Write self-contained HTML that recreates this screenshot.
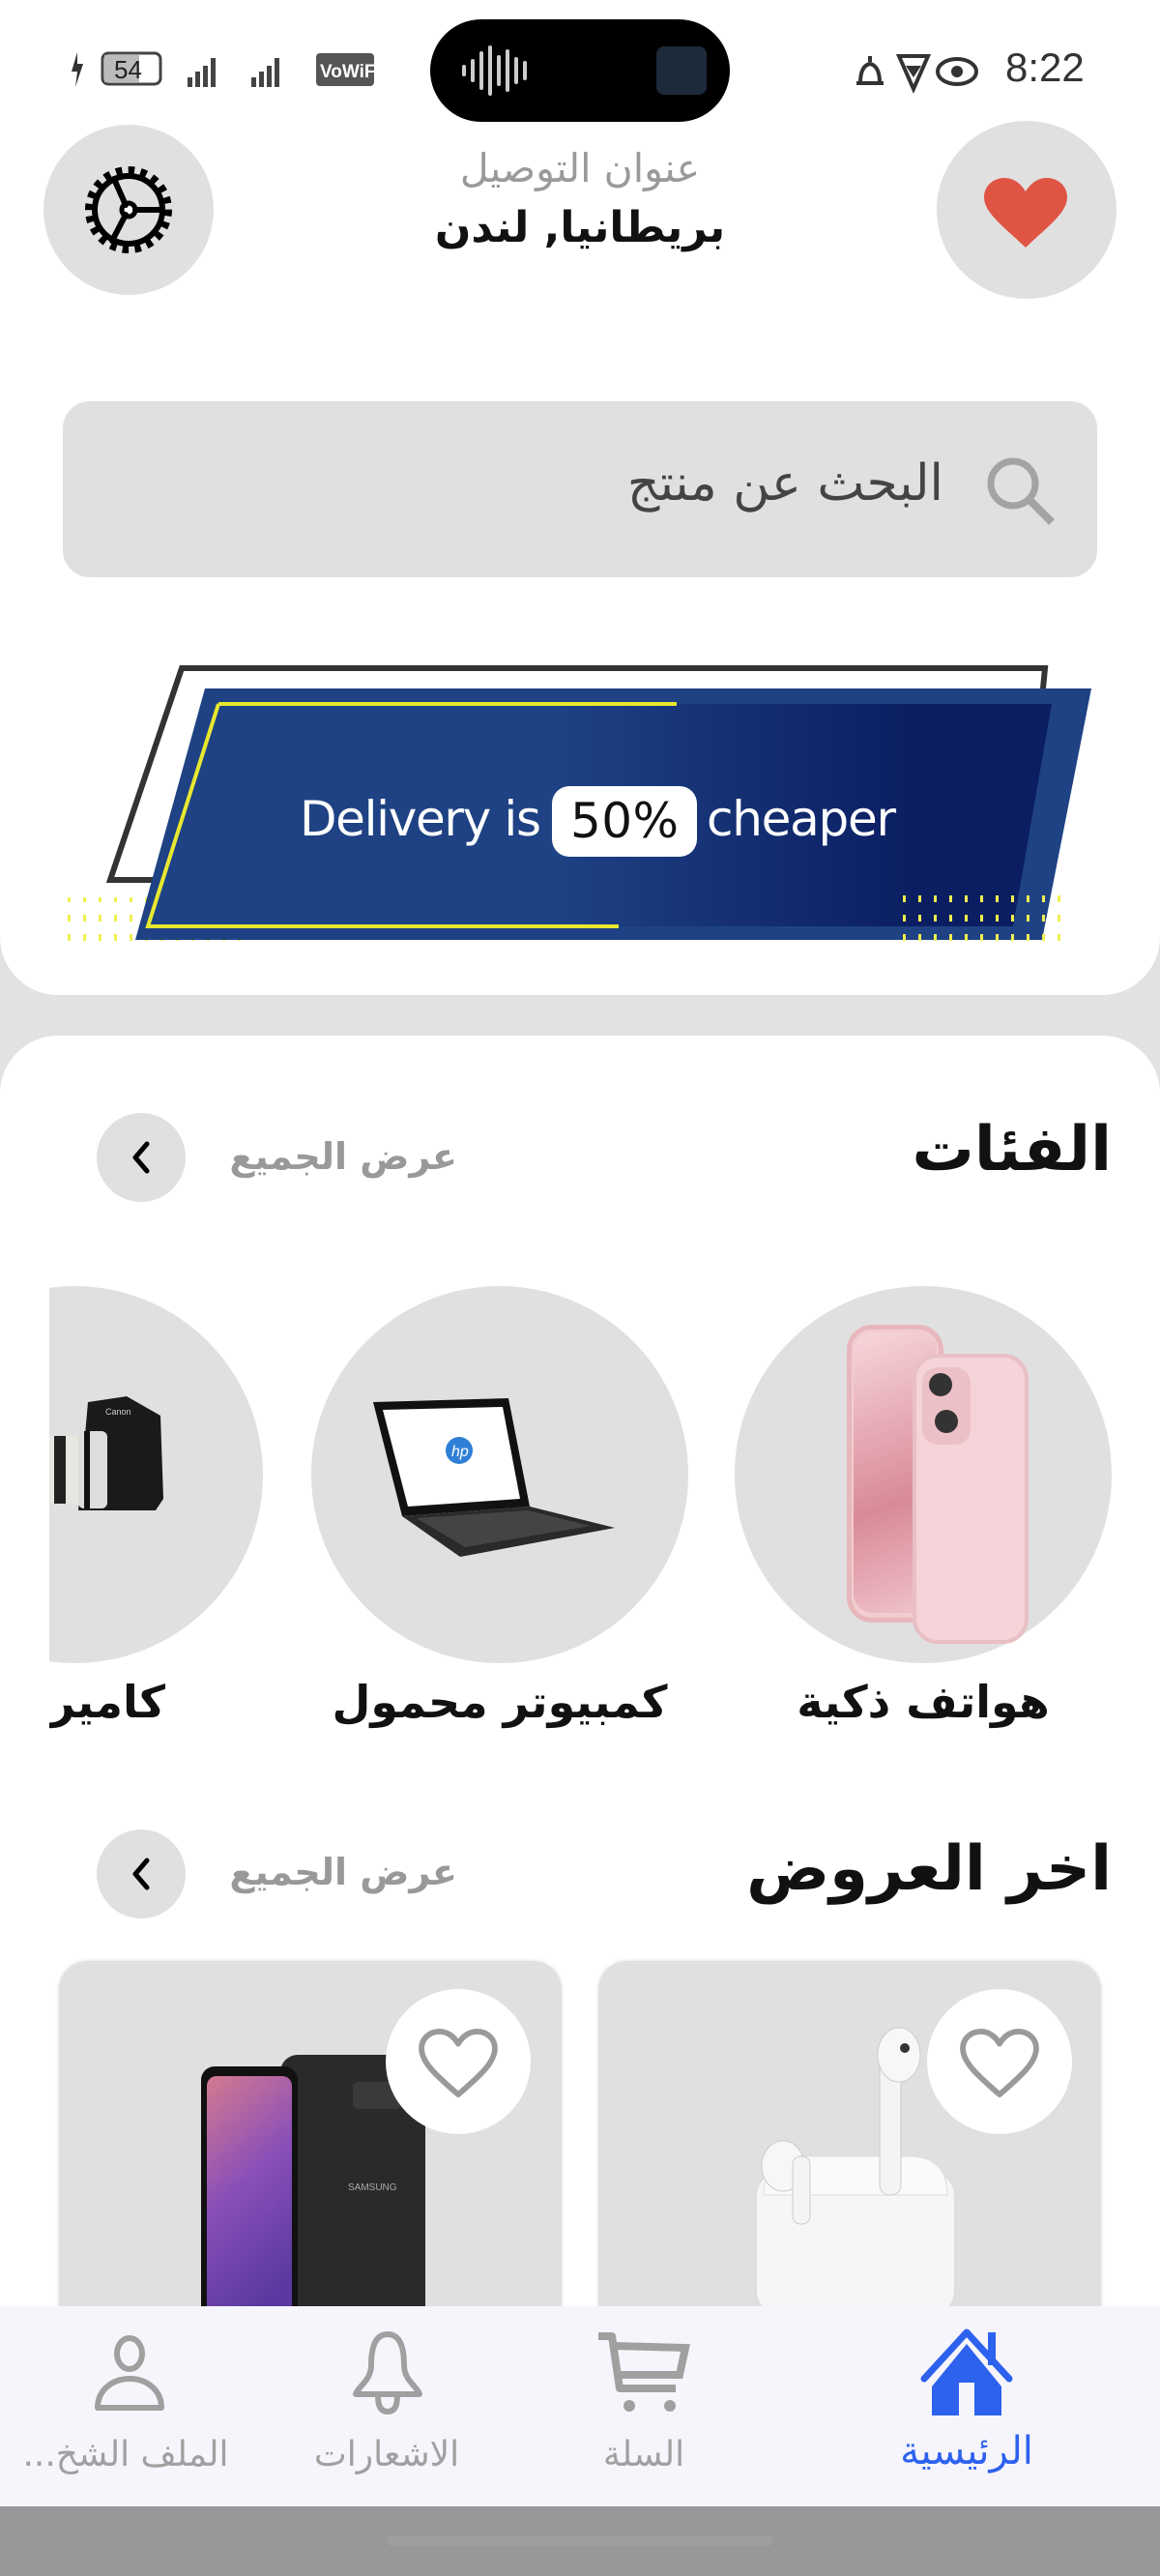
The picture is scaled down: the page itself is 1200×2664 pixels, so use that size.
<!DOCTYPE html>
<html><head><meta charset="utf-8">
<style>
*{margin:0;padding:0;box-sizing:border-box}
body{width:1200px;height:2664px;background:#e2e2e2;position:relative;overflow:hidden;font-family:"DejaVu Sans","Liberation Sans",sans-serif}
.abs{position:absolute}
.t{position:absolute;white-space:nowrap;direction:rtl}
</style></head><body>
<div class="abs" style="left:0;top:0;width:1200px;height:1029px;background:#fff;border-radius:0 0 60px 60px"></div>
<div class="abs" style="left:0;top:1071px;width:1200px;height:1400px;background:#fff;border-radius:60px 60px 0 0"></div>

<div class="t" style="left:1040px;top:46px;font-family:'Liberation Sans',sans-serif;font-size:42px;color:#333;direction:ltr">8:22</div>
<svg class="abs" style="left:70px;top:48px" width="330" height="48" viewBox="0 0 330 48">
 <path d="M10 6 L4 26 L10 26 L8 42 L16 18 L10 18 Z" fill="#333"/>
 <rect x="36" y="7" width="60" height="32" rx="6" fill="none" stroke="#444" stroke-width="3"/>
 <rect x="38" y="9" width="36" height="28" fill="#bbb"/>
 <text x="48" y="33" font-family="Liberation Sans" font-size="26" fill="#222">54</text>
 <g fill="#444"><rect x="124" y="32" width="5" height="10"/><rect x="132" y="26" width="5" height="16"/><rect x="140" y="20" width="5" height="22"/><rect x="148" y="12" width="5" height="30"/>
 <rect x="190" y="32" width="5" height="10"/><rect x="198" y="26" width="5" height="16"/><rect x="206" y="20" width="5" height="22"/><rect x="214" y="12" width="5" height="30"/></g>
 <rect x="257" y="7" width="60" height="34" rx="4" fill="#555"/>
 <text x="261" y="32" font-family="Liberation Sans" font-size="19" font-weight="bold" fill="#fff">VoWiFi</text>
</svg>
<div class="abs" style="left:445px;top:20px;width:310px;height:106px;background:#000;border-radius:53px"></div>
<svg class="abs" style="left:475px;top:45px" width="90" height="56" viewBox="0 0 90 56"><g stroke="#ccc" stroke-width="4" stroke-linecap="round">
<line x1="5" y1="24" x2="5" y2="32"/><line x1="14" y1="18" x2="14" y2="38"/><line x1="23" y1="10" x2="23" y2="46"/><line x1="32" y1="4" x2="32" y2="52"/><line x1="41" y1="14" x2="41" y2="42"/><line x1="50" y1="8" x2="50" y2="48"/><line x1="59" y1="16" x2="59" y2="40"/><line x1="68" y1="20" x2="68" y2="36"/></g></svg>
<div class="abs" style="left:679px;top:48px;width:52px;height:50px;background:#1c2a3a;border-radius:8px"></div>
<svg class="abs" style="left:880px;top:50px" width="140" height="48" viewBox="0 0 140 48">
 <path d="M6 36 L34 36 M10 36 Q10 18 20 16 Q30 18 30 36 M20 8 L20 14" stroke="#333" stroke-width="4" fill="none"/>
 <path d="M50 8 L80 8 L65 42 Z" stroke="#333" stroke-width="4" fill="none"/><path d="M57 18 L73 18 L65 30Z" fill="#333"/>
 <ellipse cx="110" cy="24" rx="20" ry="13" stroke="#333" stroke-width="4" fill="none"/><circle cx="110" cy="24" r="6" fill="#333"/>
</svg>

<div class="abs" style="left:45px;top:129px;width:176px;height:176px;border-radius:50%;background:#e0e0e0"></div>
<svg class="abs" style="left:83px;top:167px" width="100" height="100" viewBox="0 0 100 100">
 <circle cx="50" cy="50" r="38" fill="none" stroke="#000" stroke-width="14" stroke-dasharray="6 5.9"/>
 <circle cx="50" cy="50" r="35" fill="#e0e0e0" stroke="#000" stroke-width="6"/>
 <circle cx="50" cy="50" r="7" fill="#fff" stroke="#000" stroke-width="5"/>
 <g stroke="#000" stroke-width="6" stroke-linecap="round"><line x1="47" y1="45" x2="35" y2="18"/><line x1="57" y1="50" x2="84" y2="50"/><line x1="47" y1="55" x2="33" y2="82"/></g>
</svg>
<div class="abs" style="left:969px;top:125px;width:186px;height:184px;border-radius:50%;background:#e0e0e0"></div>
<svg class="abs" style="left:1018px;top:184px" width="86" height="72" viewBox="0 0 86 72"><path d="M43 72 C20 50 0 36 0 20 C0 8 10 0 21 0 C31 0 38 6 43 14 C48 6 55 0 65 0 C76 0 86 8 86 20 C86 36 66 50 43 72Z" fill="#e05444"/></svg>
<div class="t" style="left:0;width:1200px;text-align:center;top:150px;font-size:41px;color:#9a9a9a">عنوان التوصيل</div>
<div class="t" style="left:0;width:1200px;text-align:center;top:210px;font-size:44px;font-weight:bold;color:#111">بريطانيا, لندن</div>

<div class="abs" style="left:65px;top:415px;width:1070px;height:182px;background:#e0e0e0;border-radius:28px"></div>
<div class="t" style="right:224px;top:470px;font-size:52px;color:#444">البحث عن منتج</div>
<svg class="abs" style="left:1018px;top:470px" width="76" height="76" viewBox="0 0 76 76"><circle cx="30" cy="30" r="23" fill="none" stroke="#a3a3a3" stroke-width="7"/><line x1="47" y1="47" x2="70" y2="70" stroke="#a3a3a3" stroke-width="8"/></svg>

<svg class="abs" style="left:0;top:660px" width="1200" height="340" viewBox="0 660 1200 340">
 <defs><linearGradient id="g" x1="0" x2="1"><stop offset="0.45" stop-color="#1e4284"/><stop offset="0.85" stop-color="#0b1e62"/></linearGradient>
 <pattern id="d" width="16" height="20" patternUnits="userSpaceOnUse"><rect x="6" y="6" width="3" height="7" fill="#f0f050"/></pattern></defs>
 <path d="M188 691 L1081 691 L1060 910 L114 910 Z" fill="#fff" stroke="#333" stroke-width="6"/>
 <rect x="70" y="928" width="180" height="56" fill="url(#d)"/>
 <path d="M212 712 L1129 712 L1078 972 L140 972 Z" fill="#1e4284"/>
 <path d="M224 728 L1088 728 L1048 958 L150 958 Z" fill="url(#g)"/>
 <path d="M226 728 L700 728 M226 728 L153 958 L640 958" stroke="#e8e830" stroke-width="4" fill="none"/>
 <rect x="928" y="922" width="180" height="56" fill="url(#d)"/>
 <rect x="571" y="813" width="150" height="73" rx="18" fill="#fff"/>
 <text x="310" y="864" font-family="DejaVu Sans" font-size="50" fill="#fff" textLength="250">Delivery is</text>
 <text x="590" y="866" font-family="DejaVu Sans" font-size="50" fill="#111" textLength="112">50%</text>
 <text x="731" y="864" font-family="DejaVu Sans" font-size="50" fill="#fff" textLength="196">cheaper</text>
</svg>

<div class="t" style="right:50px;top:1152px;font-size:64px;font-weight:bold;color:#111">الفئات</div>
<div class="t" style="right:727px;top:1174px;font-size:38px;font-weight:bold;color:#999">عرض الجميع</div>
<div class="abs" style="left:100px;top:1151px;width:92px;height:92px;border-radius:50%;background:#e0e0e0"></div>
<svg class="abs" style="left:100px;top:1151px" width="92" height="92" viewBox="0 0 92 92"><path d="M52 32 L40 46 L52 60" stroke="#000" stroke-width="5" fill="none" stroke-linecap="round" stroke-linejoin="round"/></svg>

<div class="abs" style="left:51px;top:1320px;width:1149px;height:500px;overflow:hidden">
 <div class="abs" style="left:709px;top:10px;width:390px;height:390px;border-radius:50%;background:#e0e0e0"></div>
 <div class="abs" style="left:271px;top:10px;width:390px;height:390px;border-radius:50%;background:#e0e0e0"></div>
 <div class="abs" style="left:-169px;top:10px;width:390px;height:390px;border-radius:50%;background:#e0e0e0"></div>
 <div class="abs" style="left:825px;top:50px;width:100px;height:308px;border-radius:26px;background:#f2cdd0;border:5px solid #e7b7bc"></div>
 <div class="abs" style="left:832px;top:58px;width:86px;height:290px;border-radius:20px;background:linear-gradient(160deg,#f7d6db,#d98a98 60%,#f0c4cb)"></div>
 <div class="abs" style="left:893px;top:80px;width:120px;height:300px;border-radius:26px;background:#f5d3d8;border:4px solid #e8bfc5"></div>
 <div class="abs" style="left:903px;top:94px;width:50px;height:80px;border-radius:16px;background:#ecc0c7"></div>
 <div class="abs" style="left:910px;top:100px;width:24px;height:24px;border-radius:50%;background:#333"></div>
 <div class="abs" style="left:916px;top:138px;width:24px;height:24px;border-radius:50%;background:#333"></div>
 <svg class="abs" style="left:325px;top:120px" width="280" height="180" viewBox="0 0 280 180">
  <path d="M10 10 L150 6 L172 118 L40 128 Z" fill="#111"/><path d="M20 18 L144 15 L162 110 L46 118 Z" fill="#fff"/>
  <circle cx="99" cy="60" r="14" fill="#2f7fd6"/><text x="91" y="66" font-family="Liberation Sans" font-size="16" fill="#fff" font-style="italic">hp</text>
  <path d="M40 128 L172 118 L260 140 L100 170 Z" fill="#2a2a2a"/><path d="M55 130 L170 122 L235 138 L105 160Z" fill="#444"/>
 </svg>
 <svg class="abs" style="left:-30px;top:110px" width="200" height="160" viewBox="0 0 200 160">
  <path d="M70 20 L110 14 L145 34 L148 120 L140 132 L60 132 Z" fill="#1a1a1a"/>
  <rect x="0" y="55" width="85" height="70" rx="10" fill="#e8e6e0"/><rect x="35" y="55" width="12" height="70" fill="#222"/><rect x="60" y="50" width="30" height="80" rx="6" fill="#ddd"/><rect x="66" y="50" width="6" height="80" fill="#111"/>
  <text x="88" y="33" font-family="Liberation Sans" font-size="9" fill="#ccc">Canon</text>
 </svg>
</div>
<div class="t" style="left:755px;width:400px;text-align:center;top:1733px;font-size:46px;font-weight:bold;color:#111">هواتف ذكية</div>
<div class="t" style="left:317px;width:400px;text-align:center;top:1733px;font-size:46px;font-weight:bold;color:#111">كمبيوتر محمول</div>
<div class="abs" style="left:51px;top:1720px;width:120px;height:80px;overflow:hidden"><div class="t" style="right:0;top:13px;font-size:46px;font-weight:bold;color:#111">كاميرا</div></div>

<div class="t" style="right:50px;top:1896px;font-size:64px;font-weight:bold;color:#111">اخر العروض</div>
<div class="t" style="right:727px;top:1914px;font-size:38px;font-weight:bold;color:#999">عرض الجميع</div>
<div class="abs" style="left:100px;top:1892px;width:92px;height:92px;border-radius:50%;background:#e0e0e0"></div>
<svg class="abs" style="left:100px;top:1892px" width="92" height="92" viewBox="0 0 92 92"><path d="M52 32 L40 46 L52 60" stroke="#000" stroke-width="5" fill="none" stroke-linecap="round" stroke-linejoin="round"/></svg>

<div class="abs" style="left:619px;top:2028px;width:520px;height:400px;background:#e0e0e0;border-radius:30px;box-shadow:0 0 4px rgba(0,0,0,.15)"></div>
<div class="abs" style="left:61px;top:2028px;width:520px;height:400px;background:#e0e0e0;border-radius:30px;box-shadow:0 0 4px rgba(0,0,0,.15)"></div>
<svg class="abs" style="left:760px;top:2080px" width="250" height="310" viewBox="0 0 250 310">
 <rect x="22" y="165" width="206" height="150" rx="26" fill="#f6f6f6" stroke="#ddd" stroke-width="2"/>
 <path d="M30 190 Q30 150 70 150 L180 150 Q220 150 220 190 Z" fill="#fafafa" stroke="#ddd"/>
 <rect x="150" y="40" width="22" height="150" rx="10" fill="#f4f4f4" stroke="#ccc"/>
 <ellipse cx="170" cy="45" rx="22" ry="28" fill="#f7f7f7" stroke="#ccc"/><circle cx="176" cy="38" r="5" fill="#333"/>
 <ellipse cx="50" cy="160" rx="22" ry="26" fill="#f7f7f7" stroke="#ccc"/><rect x="60" y="150" width="18" height="70" rx="8" fill="#f4f4f4" stroke="#ccc"/>
</svg>
<svg class="abs" style="left:200px;top:2115px" width="250" height="280" viewBox="0 0 250 280">
 <defs><linearGradient id="s" x1="0" y1="0" x2="0.3" y2="1"><stop offset="0" stop-color="#d47a90"/><stop offset="0.5" stop-color="#8a4fb8"/><stop offset="1" stop-color="#5a3aa0"/></linearGradient></defs>
 <rect x="90" y="10" width="150" height="280" rx="18" fill="#2a2a2a"/>
 <rect x="8" y="22" width="100" height="270" rx="14" fill="#111"/><rect x="14" y="32" width="88" height="260" rx="10" fill="url(#s)"/>
 <rect x="165" y="38" width="50" height="28" rx="6" fill="#3a3a3a"/><text x="160" y="150" font-family="Liberation Sans" font-size="10" fill="#aaa">SAMSUNG</text>
</svg>
<div class="abs" style="left:959px;top:2057px;width:150px;height:150px;border-radius:50%;background:#fff"></div>
<div class="abs" style="left:399px;top:2057px;width:150px;height:150px;border-radius:50%;background:#fff"></div>
<svg class="abs" style="left:992px;top:2098px" width="84" height="72" viewBox="0 0 86 74"><path d="M43 70 C20 50 4 36 4 21 C4 10 13 3 23 3 C32 3 39 9 43 16 C47 9 54 3 63 3 C73 3 82 10 82 21 C82 36 66 50 43 70Z" fill="none" stroke="#9a9a9a" stroke-width="6" stroke-linejoin="round"/></svg>
<svg class="abs" style="left:432px;top:2098px" width="84" height="72" viewBox="0 0 86 74"><path d="M43 70 C20 50 4 36 4 21 C4 10 13 3 23 3 C32 3 39 9 43 16 C47 9 54 3 63 3 C73 3 82 10 82 21 C82 36 66 50 43 70Z" fill="none" stroke="#9a9a9a" stroke-width="6" stroke-linejoin="round"/></svg>

<div class="abs" style="left:0;top:2385px;width:1200px;height:207px;background:#f7f5fc"></div>
<div class="abs" style="left:0;top:2592px;width:1200px;height:72px;background:#98989a"></div>
<div class="abs" style="left:400px;top:2622px;width:400px;height:11px;border-radius:6px;background:#9e9ea0"></div>
<svg class="abs" style="left:950px;top:2408px" width="100" height="92" viewBox="0 0 100 92">
 <path d="M50 16 L14 60 L14 90 L42 90 L42 56 L58 56 L58 90 L86 90 L86 60 Z" fill="#2d62ee"/>
 <path d="M6 52 L50 4 L94 52" stroke="#2d62ee" stroke-width="7" fill="none" stroke-linejoin="round" stroke-linecap="round"/>
 <rect x="72" y="4" width="8" height="34" fill="#2d62ee"/>
</svg>
<svg class="abs" style="left:615px;top:2410px" width="100" height="90" viewBox="0 0 100 90">
 <path d="M4 6 L18 6 L26 60 L84 60" stroke="#a0a0a0" stroke-width="8" fill="none" stroke-linejoin="round"/>
 <path d="M20 16 L94 18 L88 46 L24 46" stroke="#a0a0a0" stroke-width="8" fill="none"/>
 <circle cx="36" cy="78" r="6" fill="#a0a0a0"/><circle cx="78" cy="78" r="6" fill="#a0a0a0"/>
</svg>
<svg class="abs" style="left:360px;top:2410px" width="82" height="90" viewBox="0 0 82 90">
 <path d="M41 4 C28 4 24 18 24 36 C24 52 10 58 8 66 L74 66 C72 58 58 52 58 36 C58 18 54 4 41 4Z" fill="none" stroke="#a0a0a0" stroke-width="6" stroke-linejoin="round"/>
 <path d="M31 68 Q31 84 41 84 Q51 84 51 68" fill="none" stroke="#a0a0a0" stroke-width="6"/>
</svg>
<svg class="abs" style="left:96px;top:2414px" width="76" height="84" viewBox="0 0 76 84">
 <ellipse cx="38" cy="20" rx="13" ry="16" fill="none" stroke="#a0a0a0" stroke-width="6"/>
 <path d="M5 76 C5 58 20 46 38 46 C56 46 71 58 71 76 Z" fill="none" stroke="#a0a0a0" stroke-width="6" stroke-linejoin="round"/>
</svg>
<div class="t" style="left:900px;width:200px;text-align:center;top:2512px;font-size:40px;color:#2d62ee">الرئيسية</div>
<div class="t" style="left:566px;width:200px;text-align:center;top:2518px;font-size:36px;color:#a0a0a0">السلة</div>
<div class="t" style="left:290px;width:220px;text-align:center;top:2518px;font-size:36px;color:#a0a0a0">الاشعارات</div>
<div class="t" style="left:10px;width:240px;text-align:center;top:2518px;font-size:36px;color:#a0a0a0">الملف الشخ...</div>
</body></html>
